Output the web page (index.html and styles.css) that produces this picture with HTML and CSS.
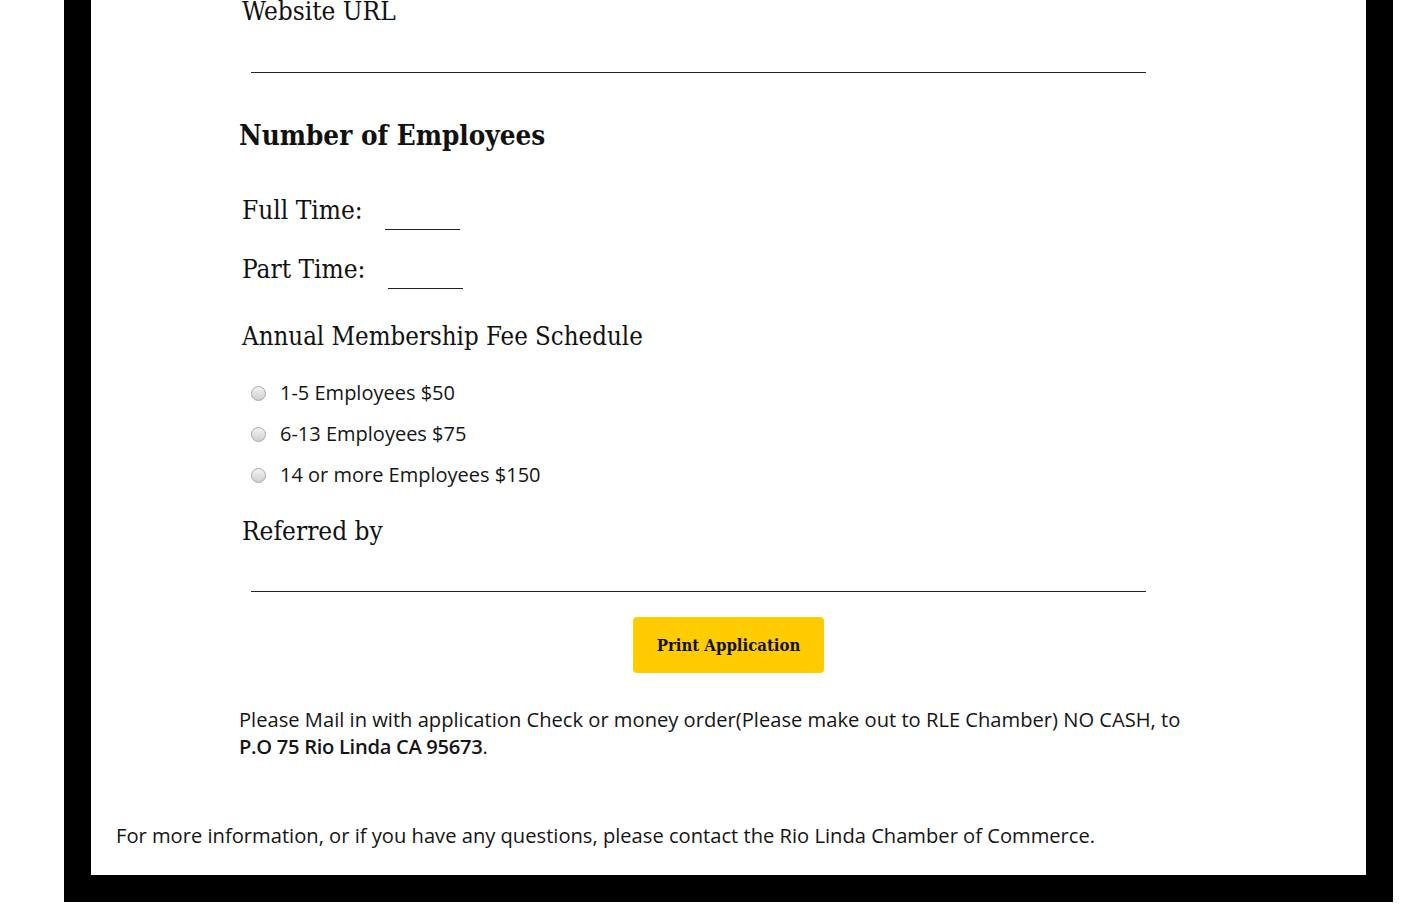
FILE: index.html
```html
<!DOCTYPE html>
<html lang="en">
<head>
<meta charset="utf-8">
<title>Membership Application</title>
<link rel="stylesheet" href="styles.css">
</head>
<body>
<div class="frame">
  <div class="sheet">
    <form class="form">
      <div class="field">
        <label class="label">Website URL</label>
        <div class="line-input url-line"></div>
      </div>
      <h2 class="section-title">Number of Employees</h2>
      <div class="count-row full">
        <span class="label">Full Time:</span>
        <span class="short-input"></span>
      </div>
      <div class="count-row part">
        <span class="label">Part Time:</span>
        <span class="short-input"></span>
      </div>
      <div class="label fee-title">Annual Membership Fee Schedule</div>
      <div class="options">
        <label class="option"><input type="radio" name="fee" class="radio"><span>1-5 Employees $50</span></label>
        <label class="option"><input type="radio" name="fee" class="radio"><span>6-13 Employees $75</span></label>
        <label class="option"><input type="radio" name="fee" class="radio"><span>14 or more Employees $150</span></label>
      </div>
      <div class="field referred">
        <label class="label">Referred by</label>
        <div class="line-input ref-line"></div>
      </div>
      <div class="actions">
        <button type="button" class="print-btn">Print Application</button>
      </div>
      <p class="mail-note">Please Mail in with application Check or money order(Please make out to RLE Chamber) NO CASH, to <strong>P.O 75 Rio Linda CA 95673</strong>.</p>
    </form>
    <p class="contact">For more information, or if you have any questions, please contact the Rio Linda Chamber of Commerce.</p>
  </div>
</div>
</body>
</html>
```
FILE: styles.css
```css
html, body {
  margin: 0;
  padding: 0;
  background: #fff;
}
body {
  font-family: "Open Sans", "DejaVu Sans", sans-serif;
  color: #151515;
  height: 916px;
  overflow: hidden;
}
.frame {
  margin-left: 64px;
  width: 1329px;
  background: #000;
  padding: 0 27px 27px 27px;
  box-sizing: border-box;
}
.sheet {
  background: #fff;
  height: 875px;
  overflow: hidden;
  display: flex;
  flex-direction: column;
}
.form {
  margin: -5px 0 0 148px;
  width: 979px;
  display: flex;
  flex-direction: column;
}
.label {
  font-family: "DejaVu Serif Condensed", "DejaVu Serif", serif;
  font-size: 26px;
  line-height: 32px;
  color: #111;
  padding-left: 3px;
}
.fee-title { font-size: 25.6px; }
.field {
  display: flex;
  flex-direction: column;
}
.line-input {
  margin-left: 12px;
  width: 895px;
  height: 0;
  border-bottom: 1px solid #222;
}
.url-line { margin-top: 45px; }
.section-title {
  font-family: "DejaVu Serif Condensed", "DejaVu Serif", serif;
  font-size: 27.6px;
  line-height: 36px;
  font-weight: bold;
  margin: 45px 0 0 0;
  color: #111;
}
.count-row {
  display: flex;
  align-items: flex-start;
  height: 36px;
}
.count-row.full { margin-top: 40px; }
.count-row.part { margin-top: 23px; }
.short-input {
  width: 75px;
  height: 0;
  border-bottom: 1px solid #222;
  margin: 35px 0 0 22px;
}
.fee-title { margin-top: 31px; }
.options {
  display: flex;
  flex-direction: column;
  gap: 15px;
  margin-top: 28px;
  font-size: 20px;
}
.option {
  display: flex;
  align-items: center;
  gap: 14px;
  padding-left: 12px;
  line-height: 26px;
}
.radio {
  appearance: none;
  -webkit-appearance: none;
  margin: 0;
  width: 15px;
  height: 15px;
  border-radius: 50%;
  border: 1px solid #a8a8a8;
  background: linear-gradient(#f4f4f4, #cfcfcf);
  box-sizing: border-box;
}
.referred { margin-top: 27px; }
.ref-line { margin-top: 44px; }
.actions {
  display: flex;
  justify-content: center;
  margin-top: 25px;
}
.print-btn {
  width: 191px;
  height: 56px;
  background: #ffcc00;
  border: none;
  border-radius: 4px;
  font-family: "DejaVu Serif Condensed", "DejaVu Serif", serif;
  font-weight: bold;
  font-size: 16.6px;
  color: #111;
  padding: 0;
}
.mail-note {
  font-size: 20.15px;
  line-height: 27px;
  margin: 33px 0 0 0;
  width: 955px;
}
.mail-note strong {
  font-weight: 600;
  letter-spacing: -0.3px;
}
.contact {
  font-size: 20.15px;
  line-height: 27px;
  margin: 62px 0 0 25px;
}
```
